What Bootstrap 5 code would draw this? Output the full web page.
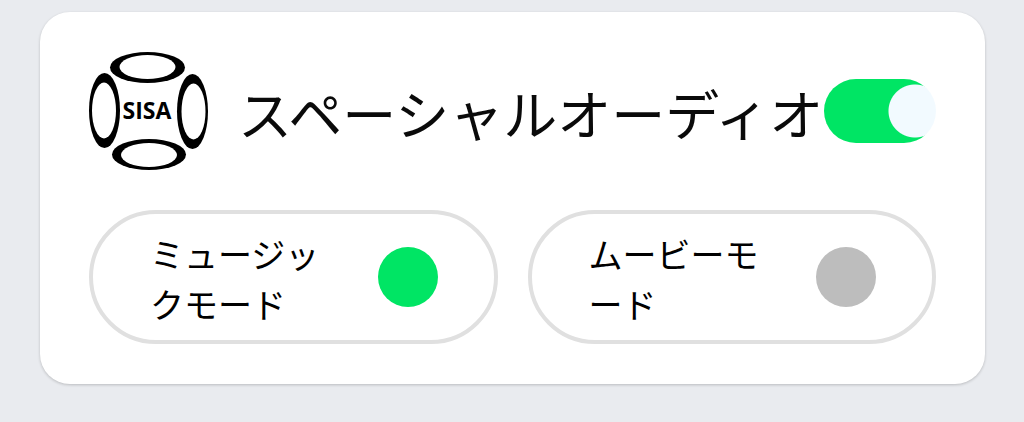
<!DOCTYPE html>
<html lang="ja">
<head>
<meta charset="utf-8">
<meta name="viewport" content="width=device-width, initial-scale=1">
<title>スペーシャルオーディオ</title>
<link href="https://cdn.jsdelivr.net/npm/bootstrap@5.3.0/dist/css/bootstrap.min.css" rel="stylesheet">
<style>
  body {
    background: #e9ebef;
    color: #0a0a0a;
    font-family: "Noto Sans CJK JP", sans-serif;
    padding: 12px 39px 12px 40px;
  }
  .audio-panel {
    background: #fff;
    border-radius: 30px;
    padding: 40px 49px;
    box-shadow: 0 1px 3px rgba(0, 0, 0, .2);
  }
  .brand-logo { width: 120px; height: 118px; }
  .panel-title {
    min-width: 0;
    font-size: 54px;
    line-height: 80px;
    padding: 3px 0 0 29px;
  }
  .switch-input {
    appearance: none;
    width: 112px;
    height: 64px;
    border-radius: 32px;
    background: radial-gradient(circle at 21px 50%, #f2faff 26px, #00e564 27px);
  }
  .switch-input:checked {
    background: radial-gradient(circle at 91px 50%, #f2faff 26px, #00e564 27px);
  }
  .modes { gap: 30px; margin-top: 40px; }
  .mode-pill {
    flex: 1 1 0;
    gap: 40px;
    border: 4px solid #e0e0e0;
    border-radius: 67px;
    padding: 13px 56px 13px 57px;
    font-size: 34px;
    line-height: 50px;
    word-break: break-all;
    line-break: anywhere;
    color: #000;
  }
  .mode-pill span { padding-top: 2px; margin-bottom: -2px; }
  .mode-dot {
    appearance: none;
    width: 60px;
    height: 60px;
    border-radius: 50%;
    background: #bdbdbd;
  }
  .mode-dot:checked { background: #00e564; }
</style>
</head>
<body>
<main class="audio-panel">
  <div class="d-flex align-items-center">
    <svg class="brand-logo flex-shrink-0" viewBox="0 0 120 118" role="img" aria-label="SISA">
      <g fill="#000">
        <ellipse cx="58.500" cy="15.500" rx="37.500" ry="15.500"/>
        <ellipse cx="60" cy="102.500" rx="37" ry="15.500"/>
        <ellipse cx="15.500" cy="58.500" rx="15.500" ry="37.500"/>
        <ellipse cx="103.500" cy="59.500" rx="15.500" ry="37.500"/>
      </g>
      <g fill="#fff">
        <ellipse cx="58.500" cy="15" rx="28" ry="12"/>
        <ellipse cx="60" cy="103" rx="28" ry="12"/>
        <ellipse cx="15" cy="58.500" rx="12" ry="28"/>
        <ellipse cx="104.500" cy="59.500" rx="12" ry="28"/>
      </g>
      <text x="58" y="67" text-anchor="middle" font-family="'Open Sans', sans-serif" font-weight="700" font-size="23">SISA</text>
    </svg>
    <label class="panel-title flex-fill text-nowrap" for="spatial">スペーシャルオーディオ</label>
    <input class="switch-input flex-shrink-0 m-0" type="checkbox" role="switch" id="spatial" checked>
  </div>
  <div class="modes d-flex">
    <label class="mode-pill d-flex align-items-center justify-content-between" for="music">
      <span>ミュージックモード</span>
      <input class="mode-dot flex-shrink-0 m-0" type="radio" name="mode" id="music" checked>
    </label>
    <label class="mode-pill d-flex align-items-center justify-content-between" for="movie">
      <span>ムービーモード</span>
      <input class="mode-dot flex-shrink-0 m-0" type="radio" name="mode" id="movie">
    </label>
  </div>
</main>
<script src="https://cdn.jsdelivr.net/npm/bootstrap@5.3.0/dist/js/bootstrap.bundle.min.js"></script>
</body>
</html>
